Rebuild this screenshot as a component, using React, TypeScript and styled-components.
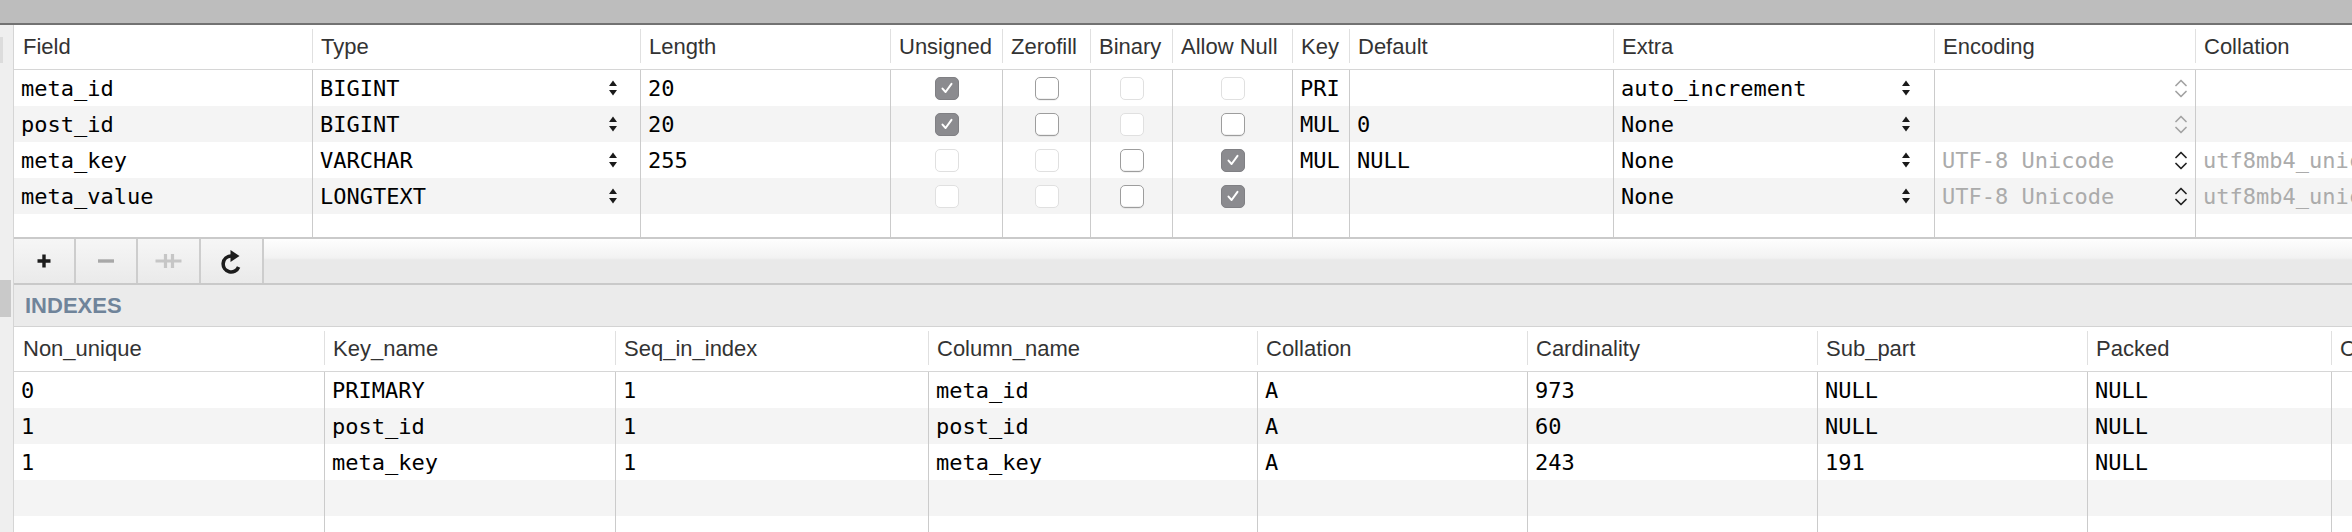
import React from 'react';
import styled, { createGlobalStyle } from 'styled-components';

const GlobalStyle = createGlobalStyle`
  html, body { margin: 0; padding: 0; background: #fff; }
  body {
    width: 2352px; height: 532px; overflow: hidden;
    font-family: "Liberation Sans", Arial, sans-serif;
  }
  #root { width: 100%; height: 100%; }
`;

const Window = styled.div`
  width: 2352px;
  height: 532px;
  display: flex;
  flex-direction: column;
  overflow: hidden;
  background: #fff;
`;

const TitleBar = styled.div`
  flex: none;
  height: 23px;
  background: #bdbdbd;
  border-bottom: 2px solid #727272;
`;

const Body = styled.div`
  flex: 1;
  min-height: 0;
  display: flex;
`;

const Gutter = styled.div`
  flex: none;
  width: 13px;
  background: #efefef;
  border-right: 1px solid #d5d5d5;
  display: flex;
  flex-direction: column;
`;

const GutterMark = styled.div<{ $mt: number; $h: number; $w: number; $c: string }>`
  margin-top: ${(p) => p.$mt}px;
  height: ${(p) => p.$h}px;
  width: ${(p) => p.$w}px;
  background: ${(p) => p.$c};
`;

const Main = styled.div`
  flex: 1;
  min-width: 0;
  display: flex;
  flex-direction: column;
  overflow: hidden;
`;

const Table = styled.div<{ $bottom?: boolean }>`
  flex: none;
  display: flex;
  flex-direction: column;
  border-bottom: ${(p) => (p.$bottom ? '2px solid #cacaca' : '0')};
`;

const Row = styled.div<{ $cols: string; $h: number; $alt?: boolean; $head?: boolean }>`
  display: grid;
  grid-template-columns: ${(p) => p.$cols};
  height: ${(p) => p.$h + (p.$head ? 1 : 0)}px;
  box-sizing: border-box;
  background: ${(p) => (p.$alt ? '#f4f4f4' : '#fff')};
  border-bottom: ${(p) => (p.$head ? '1px solid #d6d6d6' : '0')};
`;

const HeadCell = styled.div<{ $first?: boolean }>`
  display: flex;
  align-items: center;
  padding-left: 9px;
  box-sizing: border-box;
  overflow: hidden;
  white-space: nowrap;
  font-size: 22px;
  color: #333;
  background: ${(p) =>
    p.$first ? 'none' : 'linear-gradient(#e0e0e0, #e0e0e0) left 4px / 1px 34px no-repeat'};
`;

const Cell = styled.div<{ $first?: boolean; $center?: boolean; $pr?: number }>`
  display: flex;
  align-items: center;
  justify-content: ${(p) => (p.$center ? 'center' : 'space-between')};
  padding-left: ${(p) => (p.$center ? 0 : 7)}px;
  padding-right: ${(p) => p.$pr ?? 0}px;
  box-sizing: border-box;
  overflow: hidden;
  white-space: nowrap;
  border-left: ${(p) => (p.$first ? '0' : '1px solid #cbcbcb')};
  font-family: "DejaVu Sans Mono", "Liberation Mono", monospace;
  font-size: 22px;
  color: #000;
`;

const Muted = styled.span`
  color: #ababab;
`;

const Toolbar = styled.div`
  flex: none;
  height: 46px;
  box-sizing: border-box;
  display: flex;
  border-bottom: 2px solid #c9c9c9;
  background: linear-gradient(#fefefe 0, #f2f2f2 19px, #e9e9e9 21px, #e9e9e9 100%);
`;

const ToolButton = styled.button<{ $w: number }>`
  width: ${(p) => p.$w}px;
  height: 100%;
  padding: 0;
  margin: 0;
  border: 0;
  border-right: 2px solid #cdcdcd;
  background: linear-gradient(#f6f6f6, #eaeaea);
  display: flex;
  align-items: center;
  justify-content: center;
  box-sizing: border-box;
`;

const SectionBar = styled.div`
  flex: none;
  height: 42px;
  box-sizing: border-box;
  display: flex;
  align-items: center;
  padding-left: 11px;
  background: #ebebeb;
  border-bottom: 1px solid #d3d3d3;
  font-size: 22px;
  font-weight: bold;
  color: #70849a;
`;

const Box = styled.span<{ $state: CheckState }>`
  width: 24px;
  height: 23px;
  box-sizing: border-box;
  border-radius: 5px;
  display: flex;
  align-items: center;
  justify-content: center;
  background: ${(p) => (p.$state === 'on' ? '#8b8b8f' : '#fff')};
  border: 1px solid
    ${(p) => (p.$state === 'on' ? '#808084' : p.$state === 'off' ? '#9d9d9d' : '#e0e0e0')};
  box-shadow: ${(p) =>
    p.$state === 'off' ? 'inset 0 -1px 0 rgba(0,0,0,0.06), 0 1px 0 rgba(0,0,0,0.05)' : 'none'};
`;

type CheckState = 'on' | 'off' | 'dis';

const Check = ({ state }: { state: CheckState }) => (
  <Box $state={state}>
    {state === 'on' && (
      <svg width="16" height="16" viewBox="0 0 16 16">
        <path d="M3.5 8.6 L6.6 12 L12.5 3.8" fill="none" stroke="#fff" strokeWidth="2" strokeLinecap="round" strokeLinejoin="round" />
      </svg>
    )}
  </Box>
);

const Stepper = () => (
  <svg width="8" height="16" viewBox="0 0 8 16">
    <path d="M0 6 L4 0.5 L8 6 Z" fill="#1a1a1a" />
    <path d="M0 10 L8 10 L4 15.5 Z" fill="#1a1a1a" />
  </svg>
);

const Chevrons = ({ active }: { active: boolean }) => (
  <svg width="12" height="19" viewBox="0 0 12 19">
    <path d="M1 6.5 L6 1.5 L11 6.5 M1 12.5 L6 17.5 L11 12.5" fill="none" stroke={active ? '#222' : '#a3a3a3'} strokeWidth="1.7" strokeLinecap="round" strokeLinejoin="round" />
  </svg>
);

const PlusIcon = () => (
  <svg width="16" height="16" viewBox="0 0 16 16">
    <path d="M8 1.5 V14.5 M1.5 8 H14.5" stroke="#1c1c1c" strokeWidth="3.4" />
  </svg>
);

const MinusIcon = () => (
  <svg width="18" height="16" viewBox="0 0 18 16">
    <path d="M1 8 H17" stroke="#a8a8a8" strokeWidth="3.4" />
  </svg>
);

const DuplicateIcon = () => (
  <svg width="27" height="16" viewBox="0 0 27 16">
    <path d="M0.5 8 H26.5 M10.5 1 V15 M17.5 1 V15" stroke="#c6c6c6" strokeWidth="3.2" />
  </svg>
);

const RefreshIcon = () => (
  <svg width="22" height="26" viewBox="0 0 22 26">
    <path d="M17.6 19 A8 8 0 1 1 10 8" fill="none" stroke="#1c1c1c" strokeWidth="3.6" />
    <path d="M9.5 2 L18.5 8 L9.5 14 Z" fill="#1c1c1c" />
  </svg>
);

const FIELD_COLS = '298px 328px 250px 112px 88px 82px 120px 57px 264px 321px 261px 420px';
const FIELD_HEADS = [
  'Field', 'Type', 'Length', 'Unsigned', 'Zerofill', 'Binary', 'Allow Null',
  'Key', 'Default', 'Extra', 'Encoding', 'Collation',
];

type FieldRow = {
  field: string;
  type: string;
  length: string;
  checks: CheckState[];
  key: string;
  def: string;
  extra: string;
  enc: string;
  coll: string;
  encActive: boolean;
};

const FIELDS: FieldRow[] = [
  { field: 'meta_id', type: 'BIGINT', length: '20', checks: ['on', 'off', 'dis', 'dis'], key: 'PRI', def: '', extra: 'auto_increment', enc: '', coll: '', encActive: false },
  { field: 'post_id', type: 'BIGINT', length: '20', checks: ['on', 'off', 'dis', 'off'], key: 'MUL', def: '0', extra: 'None', enc: '', coll: '', encActive: false },
  { field: 'meta_key', type: 'VARCHAR', length: '255', checks: ['dis', 'dis', 'off', 'on'], key: 'MUL', def: 'NULL', extra: 'None', enc: 'UTF-8 Unicode', coll: 'utf8mb4_unicode_ci', encActive: true },
  { field: 'meta_value', type: 'LONGTEXT', length: '', checks: ['dis', 'dis', 'off', 'on'], key: '', def: '', extra: 'None', enc: 'UTF-8 Unicode', coll: 'utf8mb4_unicode_ci', encActive: true },
];

const INDEX_COLS = '310px 291px 313px 329px 270px 290px 270px 244px 300px';
const INDEX_HEADS = [
  'Non_unique', 'Key_name', 'Seq_in_index', 'Column_name', 'Collation',
  'Cardinality', 'Sub_part', 'Packed', 'Comment',
];
const INDEXES: string[][] = [
  ['0', 'PRIMARY', '1', 'meta_id', 'A', '973', 'NULL', 'NULL', ''],
  ['1', 'post_id', '1', 'post_id', 'A', '60', 'NULL', 'NULL', ''],
  ['1', 'meta_key', '1', 'meta_key', 'A', '243', '191', 'NULL', ''],
  ['', '', '', '', '', '', '', '', ''],
  ['', '', '', '', '', '', '', '', ''],
];

const FieldDataRow = ({ r, alt }: { r: FieldRow; alt: boolean }) => (
  <Row $cols={FIELD_COLS} $h={36} $alt={alt}>
    <Cell $first>{r.field}</Cell>
    <Cell $pr={23}>
      <span>{r.type}</span>
      <Stepper />
    </Cell>
    <Cell>{r.length}</Cell>
    {r.checks.map((c, i) => (
      <Cell key={i} $center>
        <Check state={c} />
      </Cell>
    ))}
    <Cell>{r.key}</Cell>
    <Cell>{r.def}</Cell>
    <Cell $pr={24}>
      <span>{r.extra}</span>
      <Stepper />
    </Cell>
    <Cell $pr={8}>
      <Muted>{r.enc}</Muted>
      <Chevrons active={r.encActive} />
    </Cell>
    <Cell>
      <Muted>{r.coll}</Muted>
    </Cell>
  </Row>
);

const EmptyRow = ({ cols, n, h, alt }: { cols: string; n: number; h: number; alt?: boolean }) => (
  <Row $cols={cols} $h={h} $alt={alt}>
    {Array.from({ length: n }).map((_, i) => (
      <Cell key={i} $first={i === 0} />
    ))}
  </Row>
);

export default function App() {
  return (
    <>
      <GlobalStyle />
      <Window>
        <TitleBar />
        <Body>
          <Gutter>
            <GutterMark $mt={12} $h={26} $w={3} $c="#dcdcdc" />
            <GutterMark $mt={217} $h={37} $w={11} $c="#c9c9c9" />
          </Gutter>
          <Main>
            <Table $bottom>
              <Row $cols={FIELD_COLS} $h={44} $head>
                {FIELD_HEADS.map((h, i) => (
                  <HeadCell key={h} $first={i === 0}>{h}</HeadCell>
                ))}
              </Row>
              {FIELDS.map((r, i) => (
                <FieldDataRow key={r.field} r={r} alt={i % 2 === 1} />
              ))}
              <EmptyRow cols={FIELD_COLS} n={FIELD_HEADS.length} h={23} />
            </Table>
            <Toolbar>
              <ToolButton $w={62} aria-label="Add field"><PlusIcon /></ToolButton>
              <ToolButton $w={62} aria-label="Remove field"><MinusIcon /></ToolButton>
              <ToolButton $w={63} aria-label="Duplicate field"><DuplicateIcon /></ToolButton>
              <ToolButton $w={63} aria-label="Refresh"><RefreshIcon /></ToolButton>
            </Toolbar>
            <SectionBar>INDEXES</SectionBar>
            <Table>
              <Row $cols={INDEX_COLS} $h={44} $head>
                {INDEX_HEADS.map((h, i) => (
                  <HeadCell key={h} $first={i === 0}>{h}</HeadCell>
                ))}
              </Row>
              {INDEXES.map((r, ri) => (
                <Row key={ri} $cols={INDEX_COLS} $h={36} $alt={ri % 2 === 1}>
                  {r.map((v, ci) => (
                    <Cell key={ci} $first={ci === 0}>{v}</Cell>
                  ))}
                </Row>
              ))}
            </Table>
          </Main>
        </Body>
      </Window>
    </>
  );
}
